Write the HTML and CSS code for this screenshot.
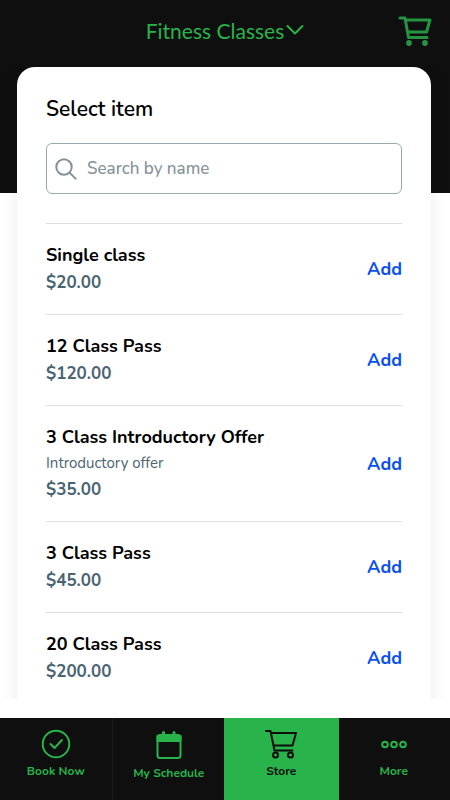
FILE: index.html
```html
<!DOCTYPE html>
<html lang="en">
<head>
<meta charset="utf-8">
<meta name="viewport" content="width=device-width, initial-scale=1">
<title>Store</title>
<link rel="stylesheet" href="styles.css">
</head>
<body>
<header class="topbar">
  <button class="category" type="button">Fitness Classes
    <svg width="18" height="12" viewBox="0 0 18 12" aria-hidden="true"><path d="M1.500 2 9 9.500 16.500 2"/></svg>
  </button>
  <button class="cart" type="button" aria-label="Cart">
    <svg width="34" height="30" viewBox="0 0 34 30" aria-hidden="true">
      <path d="M2 2h5l3.500 19.500H29M8 4h24l-3.500 12H9.500"/>
      <circle class="wheel" cx="11" cy="27" r="2.900"/><circle class="wheel" cx="27" cy="27" r="2.900"/>
    </svg>
  </button>
</header>

<main class="stage">
  <section class="card">
    <h1>Select item</h1>
    <div class="search">
      <svg width="22" height="22" viewBox="0 0 22 22" aria-hidden="true"><circle cx="9" cy="9" r="7.700"/><path d="m14.600 14.600 6 6"/></svg>
      <input type="search" placeholder="Search by name" aria-label="Search by name">
    </div>
    <ul class="items">
      <li><div><h2>Single class</h2><p class="price">$20.00</p></div><button type="button">Add</button></li>
      <li><div><h2>12 Class Pass</h2><p class="price">$120.00</p></div><button type="button">Add</button></li>
      <li><div><h2>3 Class Introductory Offer</h2><p class="note">Introductory offer</p><p class="price">$35.00</p></div><button type="button">Add</button></li>
      <li><div><h2>3 Class Pass</h2><p class="price">$45.00</p></div><button type="button">Add</button></li>
      <li><div><h2>20 Class Pass</h2><p class="price">$200.00</p></div><button type="button">Add</button></li>
    </ul>
  </section>
</main>

<nav class="tabs">
  <a href="#book">
    <svg width="30" height="30" viewBox="0 0 30 30" aria-hidden="true"><circle cx="15" cy="15" r="13.300"/><path d="m9.500 15 4 4 7.500-8"/></svg>
    Book Now
  </a>
  <a href="#schedule">
    <svg width="30" height="32" viewBox="0 0 30 32" aria-hidden="true"><rect x="3.500" y="6" width="23" height="23" rx="2.500"/><path class="solid" d="M3.500 7h23v5h-23z"/><path class="pin" d="M9.500 3.500V7M20 3.500V7"/></svg>
    My Schedule
  </a>
  <a class="active" href="#store" aria-current="page">
    <svg class="thin" width="32" height="30" viewBox="0 0 32 30" aria-hidden="true"><path d="M1 2h4.500L9.500 21.500h18M6 4h25l-3.500 12.500H8.500"/><circle cx="10.500" cy="26" r="2.500"/><circle cx="25.500" cy="26" r="2.500"/></svg>
    Store
  </a>
  <a href="#more">
    <svg width="30" height="30" viewBox="0 0 30 30" aria-hidden="true"><circle cx="6" cy="15.500" r="2.800"/><circle cx="15" cy="15.500" r="2.800"/><circle cx="24" cy="15.500" r="2.800"/></svg>
    More
  </a>
</nav>
</body>
</html>
```
FILE: styles.css
```css
* { box-sizing: border-box; }

body {
  margin: 0;
  height: 100vh;
  display: flex;
  flex-direction: column;
  background: #fff;
  color: #000;
  font-family: Nunito, Lato, sans-serif;
}

h1, h2, p, ul { margin: 0; padding: 0; }
button { border: 0; padding: 0; background: none; font: inherit; cursor: pointer; }
svg { display: block; fill: none; stroke: currentColor; stroke-width: 2; stroke-linecap: round; stroke-linejoin: round; }

.topbar {
  flex: none;
  height: 67px;
  padding: 0 18px;
  display: grid;
  grid-template-columns: 1fr auto 1fr;
  align-items: start;
  background: #0f0f0f;
  color: #29b34b;
}
.category {
  grid-column: 2;
  display: flex;
  align-items: center;
  gap: 2px;
  height: 60px;
  color: inherit;
  font-family: Lato, sans-serif;
  font-size: 21px;
}
.cart { justify-self: end; margin-top: 16px; color: #249443; }
.cart path { stroke-width: 3; }
.cart .wheel { fill: currentColor; stroke: none; }

.stage {
  flex: 1;
  min-height: 0;
  overflow: hidden;
  padding: 0 19px 0 17px;
  margin-bottom: 19px;
  background: linear-gradient(#0f0f0f 126px, #fff 126px);
}
.card {
  min-height: 100%;
  padding: 28px 29px;
  border-radius: 18px;
  background: #fff;
  box-shadow: 0 0 20px rgba(20, 20, 50, .08);
}
h1 { font-size: 21px; line-height: 28px; font-weight: 600; }

.search {
  display: flex;
  align-items: center;
  gap: 10px;
  height: 51px;
  margin: 20px 0 29px;
  padding: 0 8px;
  border: 1px solid #9aa8b0;
  border-radius: 6px;
  color: #83929b;
}
.search svg { flex: none; }
.search input {
  flex: 1;
  min-width: 0;
  border: 0;
  padding: 0;
  outline: 0;
  background: none;
  font: inherit;
  font-size: 17px;
  font-weight: 500;
}
.search input::placeholder { color: #83929b; opacity: 1; }

.items { list-style: none; }
.items li {
  display: flex;
  align-items: center;
  justify-content: space-between;
  padding: 17px 0;
  border-top: 1px solid #dedfe0;
}
.items h2 { font-size: 18px; line-height: 28px; font-weight: 700; }
.items .note { font-size: 15px; line-height: 25px; color: #4b6472; }
.items .price { font-size: 17px; line-height: 28px; font-weight: 700; color: #4b6472; }
.items button { color: #0b50f0; font-size: 18px; font-weight: 700; }

.tabs {
  flex: none;
  height: 82px;
  display: grid;
  grid-template-columns: repeat(4, 1fr);
  background: #0f0f0f;
}
.tabs a {
  display: flex;
  flex-direction: column;
  align-items: center;
  gap: 4px;
  padding-top: 11px;
  color: #29b34b;
  font-size: 12px;
  line-height: 16px;
  font-weight: 700;
  text-decoration: none;
}
.tabs a:first-child { border-right: 1px solid #1b1b1b; }
.tabs .active { margin: 0 -1px; background: #29b34b; color: #0d0d0d; }
.tabs .solid { fill: currentColor; }
.tabs .pin { stroke-width: 3; }
```
